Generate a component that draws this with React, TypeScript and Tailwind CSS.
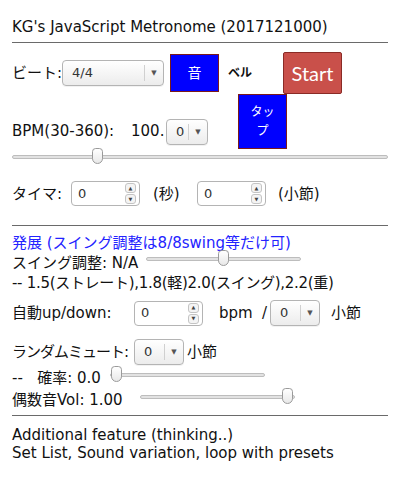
import type { JSX } from "react";

function Select({ value, w }: { value: string; w: string }): JSX.Element {
  return (
    <div
      className={`flex h-[26px] shrink-0 items-center rounded-[4px] border border-[#b4b4b4] bg-gradient-to-b from-white to-[#ececec] text-[13px] text-[#333] shadow-[0_1px_0_rgba(0,0,0,0.05)] ${w}`}
    >
      <span className="flex-1 pl-[9px]">{value}</span>
      <span className="h-[16px] w-px bg-[#d0d0d0]" />
      <span className="flex w-[18px] justify-center text-[7px] text-[#555]">▼</span>
    </div>
  );
}

function NumInput({ w }: { w: string }): JSX.Element {
  return (
    <div
      className={`flex h-[25px] shrink-0 items-center rounded-[4px] border border-[#b4b4b4] bg-white text-[13px] text-[#333] ${w}`}
    >
      <span className="flex-1 pl-[6px]">0</span>
      <div className="mr-[3px] flex flex-col gap-[1px]">
        <span className="flex h-[10px] w-[11px] items-center justify-center rounded-[3px] border border-[#c4c4c4] bg-[#f4f4f4] text-[5px] leading-none text-[#444]">▲</span>
        <span className="flex h-[10px] w-[11px] items-center justify-center rounded-[3px] border border-[#c4c4c4] bg-[#f4f4f4] text-[5px] leading-none text-[#444]">▼</span>
      </div>
    </div>
  );
}

function Slider({ w, pos }: { w: string; pos: number }): JSX.Element {
  return (
    <div className={`relative h-[18px] shrink-0 ${w}`}>
      <div className="absolute top-[7px] right-0 left-0 h-[4px] rounded-full border border-[#bdbdbd] bg-[#e2e2e2]" />
      <div
        className="absolute top-0 h-[16px] w-[11px] rounded-t-[4px] rounded-b-[6px] border border-[#9a9a9a] bg-gradient-to-b from-white to-[#e8e8e8]"
        style={{ left: pos }}
      />
    </div>
  );
}

export default function App(): JSX.Element {
  return (
    <div className="w-[405px] px-[12px] font-['DejaVu_Sans','Noto_Sans_CJK_JP',sans-serif] text-[15px] leading-[20px] whitespace-nowrap text-[#111]">
      <div className="pt-[17px] pb-[5px]">KG's JavaScript Metronome (2017121000)</div>
      <hr className="w-[376px] border-t border-[#6a6a6a]" />

      <div className="mt-[9px] flex h-[42px] items-center">
        <span className="w-[50px] shrink-0">ビート:</span>
        <Select value="4/4" w="w-[102px]" />
        <button className="ml-[6px] h-[38px] w-[49px] shrink-0 border border-[#7a1a1a] bg-[#0000ff] text-[14px] text-white">
          音
        </button>
        <span className="ml-[9px] w-[55px] shrink-0 text-[12px] font-bold">ベル</span>
        <button className="h-[42px] w-[59px] shrink-0 rounded-[2px] border border-[#8a2b26] bg-[#c9504a] font-['Lato',sans-serif] text-[20px] text-white">
          Start
        </button>
      </div>

      <div className="flex h-[55px] items-start">
        <span className="mt-[27px] w-[119px] shrink-0">BPM(30-360):</span>
        <span className="mt-[27px] w-[35px] shrink-0">100.</span>
        <div className="mt-[25px]">
          <Select value="0" w="w-[42px]" />
        </div>
        <button className="ml-[30px] h-[55px] w-[49px] shrink-0 border border-[#7a1a1a] bg-[#0000ff] text-[12px] leading-[19px] text-white">
          タッ
          <br />
          プ
        </button>
      </div>

      <div className="mt-[-1px]">
        <Slider w="w-[376px]" pos={80} />
      </div>

      <div className="mt-[15px] flex items-center">
        <span className="w-[59px] shrink-0">タイマ:</span>
        <NumInput w="w-[69px]" />
        <span className="ml-[13px] w-[44px] shrink-0">(秒)</span>
        <NumInput w="w-[69px]" />
        <span className="ml-[12px]">(小節)</span>
      </div>

      <hr className="mt-[19px] w-[376px] border-t border-[#6a6a6a]" />

      <div className="mt-[7px]">
        <div className="text-[#2323ff]">発展 (スイング調整は8/8swing等だけ可)</div>
        <div className="flex items-center">
          <span className="w-[134px] shrink-0">スイング調整: N/A</span>
          <div className="mt-[-8px]">
            <Slider w="w-[155px]" pos={72} />
          </div>
        </div>
        <div className="tracking-[-0.3px]">-- 1.5(ストレート),1.8(軽)2.0(スイング),2.2(重)</div>
      </div>

      <div className="mt-[7px] flex items-center">
        <span className="w-[122px] shrink-0">自動up/down:</span>
        <NumInput w="w-[69px]" />
        <span className="ml-[16px] w-[43px] shrink-0">bpm</span>
        <span className="w-[8px] shrink-0">/</span>
        <Select value="0" w="w-[50px]" />
        <span className="ml-[11px]">小節</span>
      </div>

      <div className="mt-[13px] flex items-center">
        <span className="w-[122px] shrink-0 tracking-[-1px]">ランダムミュート:</span>
        <Select value="0" w="w-[50px]" />
        <span className="ml-[3px]">小節</span>
      </div>

      <div className="mt-[3px] flex items-center">
        <span className="w-[98px] shrink-0">--&nbsp;&nbsp; 確率: 0.0</span>
        <div className="mt-[-6px]">
          <Slider w="w-[155px]" pos={1} />
        </div>
      </div>
      <div className="mt-[2px] flex items-center">
        <span className="w-[128px] shrink-0">偶数音Vol: 1.00</span>
        <div className="mt-[-6px]">
          <Slider w="w-[155px]" pos={142} />
        </div>
      </div>

      <hr className="mt-[5px] w-[376px] border-t border-[#6a6a6a]" />

      <div className="mt-[10px] leading-[18px]">
        <div>Additional feature (thinking..)</div>
        <div>Set List, Sound variation, loop with presets</div>
      </div>
    </div>
  );
}
